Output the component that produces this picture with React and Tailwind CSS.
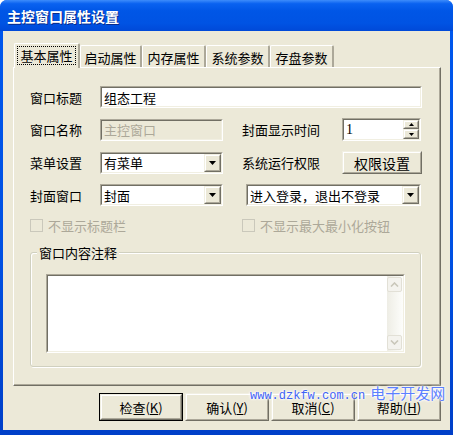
import React from "react";

function Sunken({ className = "", inner = "bg-white", children }) {
  return (
    <div
      className={`border border-t-[#ACA899] border-l-[#ACA899] border-r-white border-b-white ${className}`}
    >
      <div
        className={`h-full w-full border border-t-[#716F64] border-l-[#716F64] border-r-[#F1EFE2] border-b-[#F1EFE2] flex items-stretch ${inner}`}
      >
        {children}
      </div>
    </div>
  );
}

function Raised({ className = "", children }) {
  return (
    <div
      className={`border border-t-[#F1EFE2] border-l-[#F1EFE2] border-r-[#716F64] border-b-[#716F64] ${className}`}
    >
      <div className="h-full w-full border border-t-white border-l-white border-r-[#ACA899] border-b-[#ACA899] bg-[#ECE9D8] flex items-center justify-center">
        {children}
      </div>
    </div>
  );
}

function Arrow({ up = false }) {
  return (
    <svg width="7" height="4" viewBox="0 0 7 4">
      {up ? <path d="M3.5 0 L7 4 L0 4 Z" fill="#000" /> : <path d="M0 0 L7 0 L3.5 4 Z" fill="#000" />}
    </svg>
  );
}

function Select({ width, value }) {
  return (
    <Sunken className={`${width} h-[22px]`}>
      <div className="flex-1 flex items-center pl-[2px] whitespace-nowrap">{value}</div>
      <Raised className="w-[17px] h-[18px]">
        <Arrow />
      </Raised>
    </Sunken>
  );
}

function Label({ children, className = "" }) {
  return <div className={`whitespace-nowrap ${className}`}>{children}</div>;
}

function Checkbox({ label }) {
  return (
    <div className="flex items-center gap-[5px] text-[#ACA899]">
      <div className="w-[13px] h-[13px] border border-[#CAC8BB] bg-[#ECE9D8]" />
      <span className="whitespace-nowrap">{label}</span>
    </div>
  );
}

function DlgButton({ text, hot, isDefault }) {
  const body = (
    <Raised className="w-full h-full">
      <span className="whitespace-nowrap">
        {text}(<span className="underline">{hot}</span>)
      </span>
    </Raised>
  );
  if (isDefault) {
    return <div className="w-[84px] h-[28px] border border-black">{body}</div>;
  }
  return <div className="w-[84px] h-[28px]">{body}</div>;
}

function ScrollArrow({ up }) {
  return (
    <div className="w-[15px] h-[15px] rounded-[2px] border border-[#E2E0D6] bg-[#F4F3EE] flex items-center justify-center">
      <svg width="9" height="5" viewBox="0 0 9 5">
        <path
          d={up ? "M1 4.5 L4.5 1 L8 4.5" : "M1 0.5 L4.5 4 L8 0.5"}
          stroke="#C9C7BA"
          strokeWidth="1.6"
          fill="none"
        />
      </svg>
    </div>
  );
}

export default function App() {
  const tabs = ["启动属性", "内存属性", "系统参数", "存盘参数"];
  const tabWidths = ["w-[62px]", "w-[64px]", "w-[64px]", "w-[64px]"];

  return (
    <div className="relative w-[453px] h-[435px] flex flex-col rounded-t-[7px] overflow-hidden bg-[linear-gradient(180deg,#0058EE_0%,#0050E2_60%,#003FC8_100%)] font-['Noto_Sans_CJK_SC',sans-serif] text-[13px] leading-none text-black">
      {/* title bar */}
      <div className="h-[31px] flex items-center pl-[7px] bg-[linear-gradient(180deg,#3D8CFB_0%,#0A62F0_12%,#0056E6_35%,#0053E3_75%,#0049D8_100%)] text-white font-bold text-[14px] [text-shadow:1px_1px_0_#0A2A8A]">
        主控窗口属性设置
      </div>

      {/* client area */}
      <div className="flex-1 mx-[3px] mb-[5px] bg-[#ECE9D8] flex flex-col pl-[10px] pr-[9px] pt-[12px]">
        {/* tabs */}
        <div className="relative z-10 flex items-end h-[24px]">
          <div className="ml-[1px] w-[66px] h-[25px] -mb-[1px] bg-[#ECE9D8] border-l border-t border-white border-r-[2px] border-r-[#ACA899] rounded-t-[2px] flex items-start justify-center pt-[2px]">
            <span className="border border-dotted border-black px-[2px] py-[2px]">基本属性</span>
          </div>
          {tabs.map((t, i) => (
            <div
              key={t}
              className={`${tabWidths[i]} h-[22px] bg-[#ECE9D8] border-l border-t border-white border-r-[2px] border-r-[#ACA899] rounded-t-[2px] flex items-center justify-center pt-[1px]`}
            >
              {t}
            </div>
          ))}
        </div>

        {/* tab panel */}
        <div className="h-[319px] border border-t-white border-l-white border-r-[#716F64] border-b-[#716F64] shadow-[inset_-1px_-1px_0_#ACA899] pt-[18px] pl-[16px]">
          <div className="flex flex-col gap-[10px]">
            <div className="flex items-center">
              <Label className="w-[70px]">窗口标题</Label>
              <Sunken className="w-[322px] h-[22px]">
                <div className="flex items-center pl-[2px]">组态工程</div>
              </Sunken>
            </div>

            <div className="flex items-center">
              <Label className="w-[70px]">窗口名称</Label>
              <Sunken className="w-[123px] h-[22px]" inner="bg-[#ECE9D8]">
                <div className="flex items-center pl-[2px] text-[#ACA899]">主控窗口</div>
              </Sunken>
              <Label className="ml-[19px] w-[100px]">封面显示时间</Label>
              <Sunken className="w-[79px] h-[23px]">
                <div className="flex-1 flex items-center pl-[2px] font-['Liberation_Serif',serif] text-[14px]">1</div>
                <div className="w-[16px] flex flex-col">
                  <Raised className="h-[9px]">
                    <svg width="5" height="3" viewBox="0 0 5 3">
                      <path d="M2.5 0 L5 3 L0 3 Z" fill="#000" />
                    </svg>
                  </Raised>
                  <Raised className="h-[10px]">
                    <svg width="5" height="3" viewBox="0 0 5 3">
                      <path d="M0 0 L5 0 L2.5 3 Z" fill="#000" />
                    </svg>
                  </Raised>
                </div>
              </Sunken>
            </div>

            <div className="flex items-center">
              <Label className="w-[70px]">菜单设置</Label>
              <Select width="w-[123px]" value="有菜单" />
              <Label className="ml-[19px] w-[100px]">系统运行权限</Label>
              <Raised className="w-[80px] h-[23px]">
                <span className="text-[14px]">权限设置</span>
              </Raised>
            </div>

            <div className="flex items-center">
              <Label className="w-[70px]">封面窗口</Label>
              <Select width="w-[123px]" value="封面" />
              <div className="ml-[23px]">
                <Select width="w-[175px]" value="进入登录，退出不登录" />
              </div>
            </div>
          </div>

          <div className="mt-[13px] flex items-center h-[13px]">
            <div className="w-[212px]">
              <Checkbox label="不显示标题栏" />
            </div>
            <Checkbox label="不显示最大最小化按钮" />
          </div>

          {/* group box */}
          <div className="relative mt-[20px] w-[391px] h-[115px] rounded-[3px] border border-[#D0D0BF] shadow-[inset_1px_1px_0_#fff,1px_1px_0_#fff] pl-[15px] pt-[21px]">
            <div className="absolute left-[6px] top-[-7px] px-[2px] bg-[#ECE9D8]">窗口内容注释</div>
            <Sunken className="w-[359px] h-[79px]">
              <div className="flex-1" />
              <div className="w-[16px] flex flex-col justify-between py-[1px] bg-[linear-gradient(90deg,#EEEDE5_0%,#F7F7F2_60%,#FDFDFB_100%)]">
                <ScrollArrow up />
                <ScrollArrow />
              </div>
            </Sunken>
          </div>
        </div>

        {/* dialog buttons */}
        <div className="mt-[7px] flex justify-end gap-[2px]">
          <DlgButton text="检查" hot="K" isDefault />
          <DlgButton text="确认" hot="Y" />
          <DlgButton text="取消" hot="C" />
          <DlgButton text="帮助" hot="H" />
        </div>
      </div>

      {/* watermark */}
      <div className="absolute left-[250px] top-[385px] flex items-baseline [text-shadow:0_0_2px_#fff,0_0_3px_#fff,0_0_3px_#fff]">
        <span className="font-['Liberation_Mono',monospace] text-[12px] text-[#3F62F5]">www.dzkfw.com.cn</span>
        <span className="ml-[5px] text-[15px] text-[#5C80FF]">电子开发网</span>
      </div>
    </div>
  );
}
